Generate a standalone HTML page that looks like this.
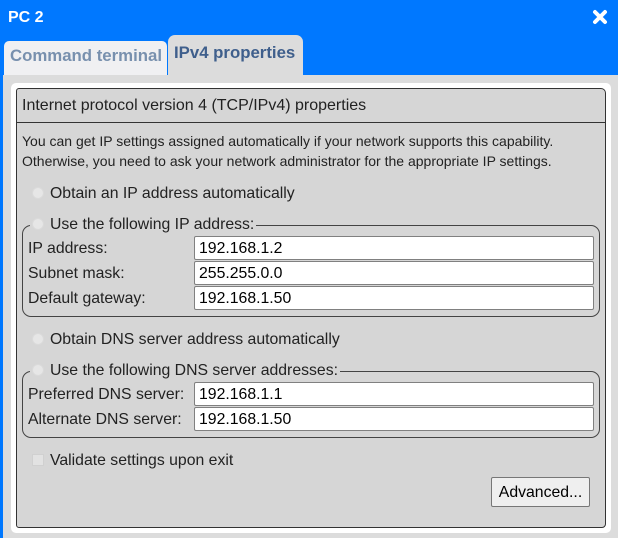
<!DOCTYPE html>
<html><head><meta charset="utf-8"><style>
*{margin:0;padding:0;box-sizing:border-box}
body{width:618px;height:538px;background:#0078ff;position:relative;overflow:hidden;font-family:"Liberation Sans",sans-serif;color:#222}
.a{position:absolute;white-space:nowrap}
.lbl{font-size:15.8px;line-height:18px}
.inp{position:absolute;left:194px;width:400px;height:24px;background:#fff;border:1px solid #808080;border-radius:2px;font-size:15.8px;line-height:23px;padding-left:4px;color:#000}
.rad{position:absolute;width:12px;height:12px;border-radius:50%;background:#e6e6e6;border:1px solid #dadada}
.fs{position:absolute;left:22px;width:578px;border:1px solid #444;border-radius:9px}
.leg{position:absolute;left:30px;height:18px;background:#d6d6d6;padding-left:20px;padding-right:2px;font-size:15.8px;line-height:18px;white-space:nowrap}
</style></head><body>
<div class="a" style="left:8px;top:9px;color:#fff;font-weight:bold;font-size:16px">PC 2</div>
<svg class="a" style="left:592px;top:9px" width="16" height="16" viewBox="0 0 16 16"><path d="M3 3L13 13M13 3L3 13" stroke="#fff" stroke-width="4" stroke-linecap="round"/></svg>
<div class="a" style="left:4px;top:41px;width:163px;height:36px;background:#f0f0f2;border-radius:5px 5px 0 0;color:#7890ae;font-weight:bold;font-size:16.8px;line-height:29px;padding-left:6px">Command terminal</div>
<div class="a" style="left:168px;top:35px;width:135px;height:42px;background:#dcdcdc;border-radius:7px 7px 0 0;color:#3f5f8c;font-weight:bold;font-size:16.8px;line-height:35px;padding-left:6px">IPv4 properties</div>
<div class="a" style="left:3px;top:75px;width:615px;height:463px;background:#dcdcdc"></div>
<div class="a" style="left:11px;top:83px;width:600px;height:450px;background:#fff;border-radius:5px"></div>
<div class="a" style="left:16px;top:88px;width:590px;height:440px;background:#d6d6d6;border:1px solid #333;border-radius:3px 5px 4px 3px"></div>
<div class="a" style="left:16px;top:122px;width:590px;height:1px;background:#333"></div>
<div class="a lbl" style="left:22px;top:97px;font-size:16px">Internet protocol version 4 (TCP/IPv4) properties</div>
<div class="a" style="left:22px;top:133px;font-size:14px">You can get IP settings assigned automatically if your network supports this capability.</div>
<div class="a" style="left:22px;top:153px;font-size:14px">Otherwise, you need to ask your network administrator for the appropriate IP settings.</div>
<div class="rad" style="left:32px;top:187px"></div>
<div class="a lbl" style="left:50px;top:185px">Obtain an IP address automatically</div>
<div class="fs" style="top:225px;height:92px"></div>
<div class="leg" style="top:216px">Use the following IP address:</div>
<div class="rad" style="left:32px;top:218px"></div>
<div class="a lbl" style="left:28px;top:240px">IP address:</div>
<div class="a lbl" style="left:28px;top:265px">Subnet mask:</div>
<div class="a lbl" style="left:28px;top:290px">Default gateway:</div>
<div class="inp" style="top:236px">192.168.1.2</div>
<div class="inp" style="top:261px">255.255.0.0</div>
<div class="inp" style="top:286px">192.168.1.50</div>
<div class="rad" style="left:32px;top:333px"></div>
<div class="a lbl" style="left:50px;top:331px">Obtain DNS server address automatically</div>
<div class="fs" style="top:371px;height:67px"></div>
<div class="leg" style="top:362px">Use the following DNS server addresses:</div>
<div class="rad" style="left:32px;top:364px"></div>
<div class="a lbl" style="left:28px;top:386px">Preferred DNS server:</div>
<div class="a lbl" style="left:28px;top:411px">Alternate DNS server:</div>
<div class="inp" style="top:382px">192.168.1.1</div>
<div class="inp" style="top:407px">192.168.1.50</div>
<div class="a" style="left:32px;top:454px;width:12px;height:12px;background:#e2e2e2;border:1px solid #d0d0d0"></div>
<div class="a lbl" style="left:50px;top:452px">Validate settings upon exit</div>
<div class="a" style="left:491px;top:477px;width:99px;height:30px;background:#efefef;border:1px solid #777;border-radius:2px;font-size:15.8px;line-height:29px;text-align:center;color:#000">Advanced...</div>
</body></html>
